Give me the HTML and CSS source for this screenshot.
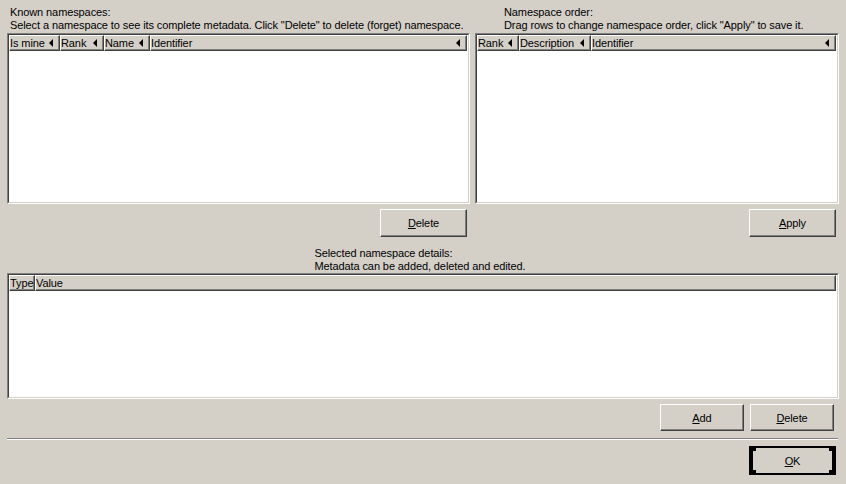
FILE: index.html
```html
<!DOCTYPE html>
<html>
<head>
    <meta charset="UTF-8">
    <title>Namespaces</title>
    <link rel="stylesheet" href="styles.css">
</head>
<body>
<div class="dialog">
    <div class="top-row">
        <div class="panel panel-left">
            <div class="caption">
                Known namespaces:<br>
                Select a namespace to see its complete metadata. Click "Delete" to delete (forget) namespace.
            </div>
            <div class="list-view list-top">
                <div class="list-inner">
                    <div class="list-header">
                        <div class="col col-sort" style="width: 51px">Is mine<span class="arrow"></span></div>
                        <div class="col col-sort" style="width: 44px">Rank<span class="arrow"></span></div>
                        <div class="col col-sort" style="width: 46px">Name<span class="arrow"></span></div>
                        <div class="col col-sort col-fill">Identifier<span class="arrow"></span></div>
                    </div>
                </div>
            </div>
            <div class="button-row">
                <button class="btn"><u>D</u>elete</button>
            </div>
        </div>

        <div class="panel panel-right">
            <div class="caption caption-indent">
                Namespace order:<br>
                Drag rows to change namespace order, click "Apply" to save it.
            </div>
            <div class="list-view list-top">
                <div class="list-inner">
                    <div class="list-header">
                        <div class="col col-sort" style="width: 42px">Rank<span class="arrow"></span></div>
                        <div class="col col-sort" style="width: 72px">Description<span class="arrow"></span></div>
                        <div class="col col-sort col-fill">Identifier<span class="arrow"></span></div>
                    </div>
                </div>
            </div>
            <div class="button-row">
                <button class="btn"><u>A</u>pply</button>
            </div>
        </div>
    </div>

    <div class="caption caption-center">
        Selected namespace details:<br>
        Metadata can be added, deleted and edited.
    </div>
    <div class="list-view list-details">
        <div class="list-inner">
            <div class="list-header">
                <div class="col" style="width: 26px">Type</div>
                <div class="col col-fill">Value</div>
            </div>
        </div>
    </div>
    <div class="button-row button-row-details">
        <button class="btn"><u>A</u>dd</button>
        <button class="btn"><u>D</u>elete</button>
    </div>

    <div class="separator"></div>

    <div class="button-row button-row-ok">
        <button class="btn btn-default"><u>O</u>K</button>
    </div>
</div>
</body>
</html>
```

FILE: styles.css
```css
body {
    margin: 0;
    background-color: #d4d0c8;
    font-family: "Liberation Sans", Arial, sans-serif;
    font-size: 11px;
    letter-spacing: -0.1px;
    color: #000;
}
.dialog {
    display: flex;
    flex-direction: column;
    padding: 6px 7px 0 7px;
}
.top-row {
    display: flex;
    gap: 5px;
}
.panel {
    display: flex;
    flex-direction: column;
}
.panel-left {
    width: 463px;
}
.panel-right {
    width: 364px;
}
.caption {
    line-height: 13px;
    height: 26px;
    margin-bottom: 1px;
    padding-left: 3px;
    white-space: nowrap;
}
.caption-indent {
    padding-left: 29px;
}
.caption-center {
    align-self: center;
    margin-top: 10px;
    margin-bottom: 0;
    margin-right: 6px;
    padding-left: 0;
}

/* sunken list box: two bevel lines, then the column header */
.list-view {
    border: 1px solid;
    border-color: #808080 #fff #fff #808080;
    box-sizing: border-box;
    display: flex;
}
.list-inner {
    flex: 1;
    background-color: #fff;
    border: 1px solid;
    border-color: #404040 #d4d0c8 #d4d0c8 #404040;
    padding-right: 1px;
}
.list-top {
    height: 171px;
}
.list-details {
    height: 126px;
}
.list-header {
    display: flex;
    height: 16px;
}
.col {
    display: flex;
    align-items: center;
    background-color: #d4d0c8;
    border-top: 1px solid #fff;
    border-left: 1px solid #fff;
    border-right: 1px solid #404040;
    border-bottom: 1px solid #404040;
    box-shadow: inset -1px -1px 0 #808080;
    box-sizing: border-box;
    white-space: nowrap;
    overflow: hidden;
}
.col-fill {
    flex: 1;
}
.arrow {
    width: 0;
    height: 0;
    border-top: 4px solid transparent;
    border-bottom: 4px solid transparent;
    border-right: 4px solid #000;
    margin-left: auto;
    margin-right: 6px;
}

.button-row {
    display: flex;
    justify-content: flex-end;
    gap: 6px;
    margin-top: 5px;
    padding-right: 3px;
}
.button-row-details {
    padding-right: 5px;
}
.btn {
    width: 87px;
    height: 28px;
    font-family: inherit;
    font-size: 11px;
    letter-spacing: inherit;
    color: #000;
    background-color: #d4d0c8;
    border: 1px solid;
    border-color: #fff #404040 #404040 #fff;
    box-shadow: inset -1px -1px 0 #808080;
    padding: 0;
}
.button-row-details .btn {
    width: 84px;
    height: 27px;
}
.separator {
    margin-top: 7px;
    height: 1px;
    border-top: 1px solid #808080;
    background-color: #fff;
    margin-right: 1px;
}
.button-row-ok {
    margin-top: 6px;
}
.btn-default {
    width: 87px;
    height: 29px;
    border-style: solid;
    border-color: #000;
    border-width: 2px 4px;
    box-shadow: none;
    background:
        linear-gradient(#000, #000) top left / 3px 3px no-repeat,
        linear-gradient(#000, #000) top right / 3px 3px no-repeat,
        linear-gradient(#000, #000) bottom left / 3px 3px no-repeat,
        linear-gradient(#000, #000) bottom right / 3px 3px no-repeat,
        #d4d0c8;
}
```
